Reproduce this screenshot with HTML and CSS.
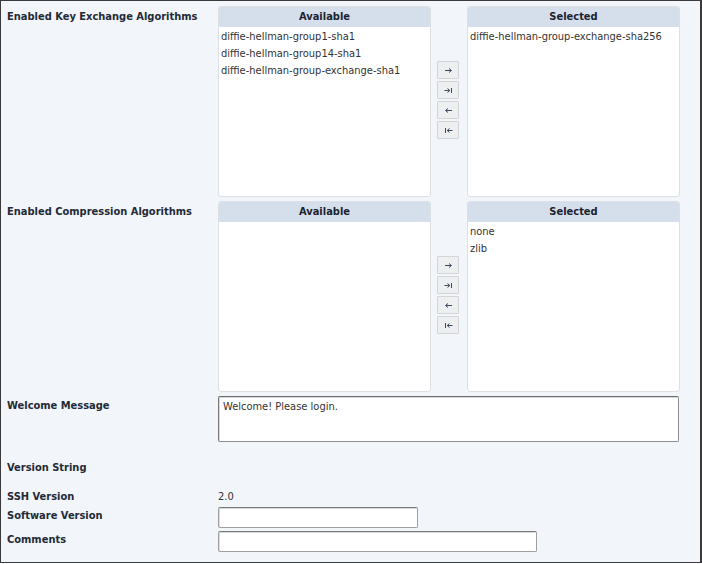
FILE: index.html
```html
<!DOCTYPE html>
<html>
<head>
<meta charset="utf-8">
<link rel="stylesheet" href="styles.css">
</head>
<body>
<div class="frame">
  <div class="row row-list">
    <div class="label">Enabled Key Exchange Algorithms</div>
    <div class="picker">
      <div class="panel">
        <div class="panel-head">Available</div>
        <ul class="panel-body">
          <li>diffie-hellman-group1-sha1</li>
          <li>diffie-hellman-group14-sha1</li>
          <li>diffie-hellman-group-exchange-sha1</li>
        </ul>
      </div>
      <div class="moves">
        <button class="mv"><svg width="9" height="7" viewBox="0 0 9 7"><path d="M1 3.5H7M5 1.5L7.5 3.5L5 5.5" fill="none" stroke="#3b4a5e" stroke-width="1"/></svg></button>
        <button class="mv"><svg width="9" height="7" viewBox="0 0 9 7"><path d="M0.5 3.5H5.5M3.5 1.5L5.8 3.5L3.5 5.5M7.5 1V6" fill="none" stroke="#3b4a5e" stroke-width="1"/></svg></button>
        <button class="mv"><svg width="9" height="7" viewBox="0 0 9 7"><path d="M8 3.5H2M4 1.5L1.5 3.5L4 5.5" fill="none" stroke="#3b4a5e" stroke-width="1"/></svg></button>
        <button class="mv"><svg width="9" height="7" viewBox="0 0 9 7"><path d="M8.5 3.5H3.5M5.5 1.5L3.2 3.5L5.5 5.5M1.5 1V6" fill="none" stroke="#3b4a5e" stroke-width="1"/></svg></button>
      </div>
      <div class="panel">
        <div class="panel-head">Selected</div>
        <ul class="panel-body">
          <li>diffie-hellman-group-exchange-sha256</li>
        </ul>
      </div>
    </div>
  </div>

  <div class="row row-list">
    <div class="label">Enabled Compression Algorithms</div>
    <div class="picker">
      <div class="panel">
        <div class="panel-head">Available</div>
        <ul class="panel-body"></ul>
      </div>
      <div class="moves">
        <button class="mv"><svg width="9" height="7" viewBox="0 0 9 7"><path d="M1 3.5H7M5 1.5L7.5 3.5L5 5.5" fill="none" stroke="#3b4a5e" stroke-width="1"/></svg></button>
        <button class="mv"><svg width="9" height="7" viewBox="0 0 9 7"><path d="M0.5 3.5H5.5M3.5 1.5L5.8 3.5L3.5 5.5M7.5 1V6" fill="none" stroke="#3b4a5e" stroke-width="1"/></svg></button>
        <button class="mv"><svg width="9" height="7" viewBox="0 0 9 7"><path d="M8 3.5H2M4 1.5L1.5 3.5L4 5.5" fill="none" stroke="#3b4a5e" stroke-width="1"/></svg></button>
        <button class="mv"><svg width="9" height="7" viewBox="0 0 9 7"><path d="M8.5 3.5H3.5M5.5 1.5L3.2 3.5L5.5 5.5M1.5 1V6" fill="none" stroke="#3b4a5e" stroke-width="1"/></svg></button>
      </div>
      <div class="panel">
        <div class="panel-head">Selected</div>
        <ul class="panel-body">
          <li>none</li>
          <li>zlib</li>
        </ul>
      </div>
    </div>
  </div>

  <div class="row row-welcome">
    <div class="label">Welcome Message</div>
    <div class="textarea">Welcome! Please login.</div>
  </div>

  <div class="row row-section">
    <div class="label">Version String</div>
  </div>

  <div class="row row-ssh">
    <div class="label">SSH Version</div>
    <div class="value">2.0</div>
  </div>

  <div class="row row-input">
    <div class="label">Software Version</div>
    <div class="input input-short"></div>
  </div>

  <div class="row row-input">
    <div class="label">Comments</div>
    <div class="input input-long"></div>
  </div>
</div>
</body>
</html>
```

FILE: styles.css
```css
html, body {
  margin: 0;
  padding: 0;
  background: #ffffff;
}

.frame {
  box-sizing: border-box;
  width: 702px;
  height: 563px;
  border: 1px solid #3a3a3a;
  border-right-width: 2px;
  background: #f2f5fa;
  padding: 5px 0 0 6px;
  font-family: "DejaVu Sans Condensed", "DejaVu Sans", sans-serif;
  font-size: 11px;
  color: #333333;
}

.row {
  display: grid;
  grid-template-columns: 211px 1fr;
}

.label {
  font-weight: bold;
  color: #222a36;
  line-height: 14px;
}

.row-list {
  margin-bottom: 4px;
}

.row-list .label {
  padding-top: 4px;
}

.picker {
  display: flex;
  align-items: center;
}

.panel {
  width: 213px;
  height: 191px;
  box-sizing: border-box;
  border: 1px solid #dcdfe4;
  border-radius: 3px;
  background: #ffffff;
  display: flex;
  flex-direction: column;
  overflow: hidden;
}

.panel-head {
  height: 20px;
  line-height: 20px;
  background: #d5dfeb;
  text-align: center;
  font-weight: bold;
  color: #1c2230;
  flex: none;
}

.panel-body {
  list-style: none;
  margin: 0;
  padding: 1px 0 0 2px;
}

.panel-body li {
  line-height: 17px;
  color: #333333;
}

.moves {
  width: 36px;
  display: flex;
  flex-direction: column;
  align-items: center;
  gap: 2px;
  margin-top: -3px;
  padding-right: 2px;
  box-sizing: border-box;
}

.mv {
  width: 22px;
  height: 18px;
  padding: 0;
  margin: 0;
  border: 1px solid #d2d4d8;
  border-radius: 1px;
  background: #eeeff1;
  display: flex;
  align-items: center;
  justify-content: center;
}

.mv svg {
  display: block;
}

.row-welcome {
  height: 65px;
}

.row-welcome .label {
  padding-top: 3px;
}

.textarea {
  box-sizing: border-box;
  width: 461px;
  height: 46px;
  border: 1px solid #8f8f8f;
  border-top-color: #6d6d6d;
  border-left-color: #7a7a7a;
  border-radius: 2px;
  background: #ffffff;
  padding: 3px 4px;
  line-height: 14px;
  color: #333333;
  box-shadow: inset 1px 1px 0 #d8d8d8;
}

.row-section {
  height: 29px;
}

.row-ssh {
  height: 17px;
}

.value {
  line-height: 14px;
  color: #333333;
}

.row-input {
  height: 24px;
  align-items: center;
}

.row-input .label {
  align-self: start;
  padding-top: 2px;
}

.input {
  box-sizing: border-box;
  height: 21px;
  border: 1px solid #a0a0a0;
  border-top-color: #7a7a7a;
  border-radius: 2px;
  background: #ffffff;
  box-shadow: inset 1px 1px 0 #dadada;
  align-self: start;
}

.input-short {
  width: 200px;
}

.input-long {
  width: 319px;
}
```
